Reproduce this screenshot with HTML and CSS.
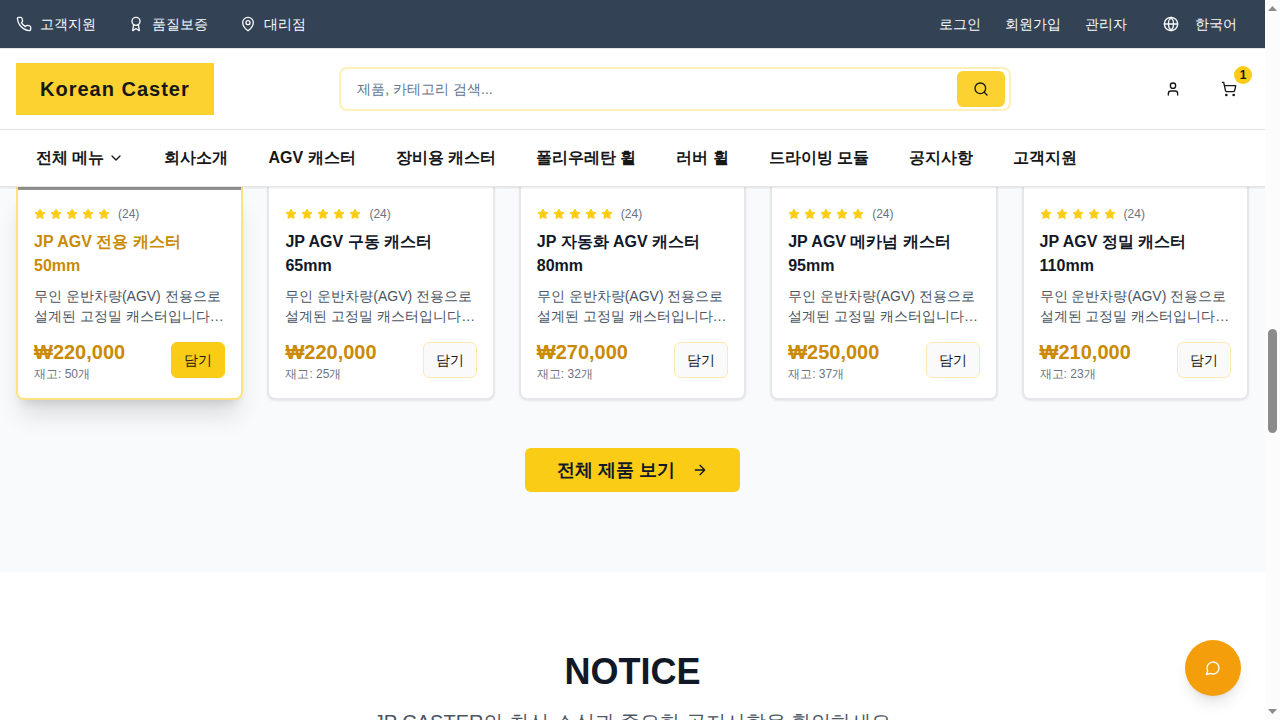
FILE: index.html
```html
<!DOCTYPE html>
<html lang="ko">
<head>
<meta charset="utf-8">
<meta name="viewport" content="width=device-width, initial-scale=1">
<title>Korean Caster</title>
<link rel="stylesheet" href="styles.css">
</head>
<body>
<svg class="sprite" aria-hidden="true">
  <symbol id="phone" viewBox="0 0 24 24"><path d="M22 16.92v3a2 2 0 0 1-2.18 2 19.79 19.79 0 0 1-8.63-3.07 19.5 19.5 0 0 1-6-6 19.79 19.79 0 0 1-3.07-8.67A2 2 0 0 1 4.11 2h3a2 2 0 0 1 2 1.72 12.84 12.84 0 0 0 .7 2.81 2 2 0 0 1-.45 2.11L8.09 9.91a16 16 0 0 0 6 6l1.27-1.27a2 2 0 0 1 2.11-.45 12.84 12.84 0 0 0 2.81.7A2 2 0 0 1 22 16.92z"/></symbol>
  <symbol id="award" viewBox="0 0 24 24"><path d="m15.477 12.89 1.515 8.526a.5.5 0 0 1-.81.47l-3.58-2.687a1 1 0 0 0-1.197 0l-3.586 2.686a.5.5 0 0 1-.81-.469l1.514-8.526"/><circle cx="12" cy="8" r="6"/></symbol>
  <symbol id="pin" viewBox="0 0 24 24"><path d="M20 10c0 4.993-5.539 10.193-7.399 11.799a1 1 0 0 1-1.202 0C9.539 20.193 4 14.993 4 10a8 8 0 0 1 16 0"/><circle cx="12" cy="10" r="3"/></symbol>
  <symbol id="globe" viewBox="0 0 24 24"><circle cx="12" cy="12" r="10"/><path d="M12 2a14.5 14.5 0 0 0 0 20 14.5 14.5 0 0 0 0-20M2 12h20"/></symbol>
  <symbol id="search" viewBox="0 0 24 24"><circle cx="11" cy="11" r="8"/><path d="m21 21-4.3-4.3"/></symbol>
  <symbol id="user" viewBox="0 0 24 24"><path d="M19 21v-2a4 4 0 0 0-4-4H9a4 4 0 0 0-4 4v2"/><circle cx="12" cy="7" r="4"/></symbol>
  <symbol id="cart" viewBox="0 0 24 24"><circle cx="8" cy="21" r="1"/><circle cx="19" cy="21" r="1"/><path d="M2.05 2.05h2l2.66 12.42a2 2 0 0 0 2 1.58h9.78a2 2 0 0 0 1.95-1.57l1.65-7.43H5.12"/></symbol>
  <symbol id="chevron" viewBox="0 0 24 24"><path d="m6 9 6 6 6-6"/></symbol>
  <symbol id="arrow" viewBox="0 0 24 24"><path d="M5 12h14M12 5l7 7-7 7"/></symbol>
  <symbol id="chat" viewBox="0 0 24 24"><path d="M7.9 20A9 9 0 1 0 4 16.1L2 22Z"/></symbol>
  <symbol id="star" viewBox="0 0 24 24"><path d="M12 2l3.09 6.26L22 9.27l-5 4.87 1.18 6.88L12 17.77l-6.18 3.25L7 14.14 2 9.27l6.91-1.01L12 2z"/></symbol>
  <symbol id="stars" viewBox="0 0 76 12"><use href="#star" width="12" height="12"/><use href="#star" x="16" width="12" height="12"/><use href="#star" x="32" width="12" height="12"/><use href="#star" x="48" width="12" height="12"/><use href="#star" x="64" width="12" height="12"/></symbol>
</svg>
<div class="page">
  <header class="header">
    <div class="topbar">
      <div class="topbar-links">
        <a href="#"><svg class="icon"><use href="#phone"/></svg>고객지원</a>
        <a href="#"><svg class="icon"><use href="#award"/></svg>품질보증</a>
        <a href="#"><svg class="icon"><use href="#pin"/></svg>대리점</a>
      </div>
      <div class="account-links">
        <a href="#">로그인</a>
        <a href="#">회원가입</a>
        <a href="#">관리자</a>
        <button class="language" type="button"><svg class="icon"><use href="#globe"/></svg>한국어</button>
      </div>
    </div>
    <div class="masthead">
      <a class="logo" href="#">Korean Caster</a>
      <form class="search">
        <input type="search" aria-label="제품 검색" placeholder="제품, 카테고리 검색...">
        <button type="button" aria-label="검색"><svg class="icon"><use href="#search"/></svg></button>
      </form>
      <div class="actions">
        <button type="button" aria-label="계정"><svg class="icon"><use href="#user"/></svg></button>
        <button type="button" aria-label="장바구니"><svg class="icon"><use href="#cart"/></svg><span class="badge">1</span></button>
      </div>
    </div>
    <nav class="nav">
      <button type="button">전체 메뉴<svg class="icon"><use href="#chevron"/></svg></button>
      <a href="#">회사소개</a>
      <a href="#">AGV 캐스터</a>
      <a href="#">장비용 캐스터</a>
      <a href="#">폴리우레탄 휠</a>
      <a href="#">러버 휠</a>
      <a href="#">드라이빙 모듈</a>
      <a href="#">공지사항</a>
      <a href="#">고객지원</a>
    </nav>
  </header>
  <main>
    <section class="products">
      <div class="grid">
        <article class="card card-active">
          <div class="media"></div>
          <div class="card-body">
            <div class="rating"><svg class="stars"><use href="#stars"/></svg><span>(24)</span></div>
            <h3>JP AGV 전용 캐스터 50mm</h3>
            <p class="desc">무인 운반차량(AGV) 전용으로 설계된 고정밀 캐스터입니다…</p>
            <div class="buy"><div><div class="price">₩220,000</div><div class="stock">재고: 50개</div></div><button type="button">담기</button></div>
          </div>
        </article>
        <article class="card">
          <div class="media"></div>
          <div class="card-body">
            <div class="rating"><svg class="stars"><use href="#stars"/></svg><span>(24)</span></div>
            <h3>JP AGV 구동 캐스터 65mm</h3>
            <p class="desc">무인 운반차량(AGV) 전용으로 설계된 고정밀 캐스터입니다…</p>
            <div class="buy"><div><div class="price">₩220,000</div><div class="stock">재고: 25개</div></div><button type="button">담기</button></div>
          </div>
        </article>
        <article class="card">
          <div class="media"></div>
          <div class="card-body">
            <div class="rating"><svg class="stars"><use href="#stars"/></svg><span>(24)</span></div>
            <h3>JP 자동화 AGV 캐스터 80mm</h3>
            <p class="desc">무인 운반차량(AGV) 전용으로 설계된 고정밀 캐스터입니다…</p>
            <div class="buy"><div><div class="price">₩270,000</div><div class="stock">재고: 32개</div></div><button type="button">담기</button></div>
          </div>
        </article>
        <article class="card">
          <div class="media"></div>
          <div class="card-body">
            <div class="rating"><svg class="stars"><use href="#stars"/></svg><span>(24)</span></div>
            <h3>JP AGV 메카넘 캐스터 95mm</h3>
            <p class="desc">무인 운반차량(AGV) 전용으로 설계된 고정밀 캐스터입니다…</p>
            <div class="buy"><div><div class="price">₩250,000</div><div class="stock">재고: 37개</div></div><button type="button">담기</button></div>
          </div>
        </article>
        <article class="card">
          <div class="media"></div>
          <div class="card-body">
            <div class="rating"><svg class="stars"><use href="#stars"/></svg><span>(24)</span></div>
            <h3>JP AGV 정밀 캐스터 110mm</h3>
            <p class="desc">무인 운반차량(AGV) 전용으로 설계된 고정밀 캐스터입니다…</p>
            <div class="buy"><div><div class="price">₩210,000</div><div class="stock">재고: 23개</div></div><button type="button">담기</button></div>
          </div>
        </article>
      </div>
      <a class="view-all" href="#">전체 제품 보기<svg class="icon"><use href="#arrow"/></svg></a>
    </section>
    <section class="notice">
      <h2>NOTICE</h2>
      <p>JP CASTER의 최신 소식과 중요한 공지사항을 확인하세요</p>
    </section>
  </main>
  <button class="chat" type="button" aria-label="채팅 상담"><svg class="icon"><use href="#chat"/></svg></button>
</div>
<div class="scrollbar" aria-hidden="true">
  <svg class="scroll-arrow" viewBox="0 0 9 5"><path d="M0 5 4.5 0 9 5z"/></svg>
  <div class="track"><div class="thumb"></div></div>
  <svg class="scroll-arrow" viewBox="0 0 9 5"><path d="M0 0 4.5 5 9 0z"/></svg>
</div>
</body>
</html>
```
FILE: styles.css
```css
*, *::before, *::after { box-sizing: border-box; }
body {
  margin: 0;
  display: flex;
  height: 100vh;
  overflow: hidden;
  background: #fff;
  color: #111827;
  font-family: "Liberation Sans", sans-serif;
  font-size: 14px;
  line-height: 20px;
  word-break: keep-all;
}
h2, h3, p { margin: 0; }
a { color: inherit; text-decoration: none; }
button, input { font: inherit; color: inherit; margin: 0; }
button { border: 0; padding: 0; background: none; cursor: pointer; }
.sprite { position: absolute; width: 0; height: 0; }
.icon {
  width: 16px;
  height: 16px;
  flex: none;
  fill: none;
  stroke: currentColor;
  stroke-width: 2;
  stroke-linecap: round;
  stroke-linejoin: round;
}
.page { position: relative; flex: 1; min-width: 0; overflow: hidden; }

.header {
  position: relative;
  z-index: 2;
  background: #fff;
  border-bottom: 1px solid #e5e5e5;
  box-shadow: 0 1px 2px rgba(0, 0, 0, 0.1);
}
.topbar {
  display: flex;
  justify-content: space-between;
  align-items: center;
  height: 48px;
  padding: 0 16px;
  background: #344256;
  color: #f8fafc;
}
.topbar-links, .account-links { display: flex; align-items: center; }
.topbar-links { gap: 32px; }
.topbar-links a { display: flex; align-items: center; gap: 8px; }
.account-links { gap: 24px; }
.language { display: flex; align-items: center; gap: 16px; padding: 0 12px; }
.masthead {
  display: flex;
  justify-content: space-between;
  align-items: center;
  height: 82px;
  padding: 0 16px;
  border-top: 1px solid #e5e5e5;
  border-bottom: 1px solid #e5e5e5;
  color: #171717;
}
.logo {
  padding: 12px 24px;
  background: #fbd22f;
  font-size: 20px;
  line-height: 28px;
  font-weight: 700;
  letter-spacing: 1px;
}
.search {
  display: flex;
  align-items: center;
  flex: 0 1 672px;
  height: 44px;
  padding-right: 4px;
  border: 2px solid #fef0b8;
  border-radius: 8px;
}
.search input {
  flex: 1;
  min-width: 0;
  padding: 0 16px;
  border: 0;
  outline: 0;
  background: none;
}
.search input::placeholder { color: #64748b; opacity: 1; }
.search button {
  display: grid;
  place-items: center;
  width: 48px;
  height: 36px;
  border-radius: 6px;
  background: #fbd22f;
}
.actions { display: flex; gap: 16px; padding-left: 16px; }
.actions button { position: relative; display: grid; place-items: center; width: 40px; height: 40px; }
.badge {
  position: absolute;
  top: -3px;
  right: -3px;
  width: 18px;
  height: 18px;
  border-radius: 50%;
  background: #facc15;
  font-size: 12px;
  line-height: 18px;
  font-weight: 700;
  text-align: center;
}
.nav {
  display: flex;
  align-items: center;
  gap: 40px;
  height: 56px;
  padding: 0 36px;
  color: #171717;
  font-size: 16px;
  line-height: 24px;
  font-weight: 700;
  white-space: nowrap;
}
.nav button { display: flex; align-items: center; gap: 4px; }

.products { padding: 0 16px 80px; background: #f9fafc; text-align: center; }
.grid { display: grid; grid-template-columns: repeat(5, minmax(0, 1fr)); gap: 24px; text-align: left; }
.card {
  overflow: hidden;
  border: 2px solid #e5e7eb;
  border-top: 0;
  border-radius: 0 0 8px 8px;
  background: #fff;
  box-shadow: 0 1px 2px rgba(0, 0, 0, 0.08);
}
.card-active { border-color: #fde283; box-shadow: 0 20px 25px -5px rgba(0, 0, 0, 0.12), 0 8px 10px -6px rgba(0, 0, 0, 0.12); }
.media { height: 3px; }
.card-active .media { background: #939393; }
.card-body { padding: 16px; }
.rating { display: flex; align-items: center; gap: 8px; color: #6b7280; font-size: 12px; line-height: 16px; }
.stars { width: 76px; height: 12px; fill: #facc15; stroke: #facc15; stroke-width: 2; stroke-linejoin: round; }
.card h3 { margin: 8px 0; font-size: 16px; line-height: 24px; font-weight: 700; }
.card-active h3, .price { color: #ca8a04; }
.desc { color: #4b5563; }
.buy { display: flex; align-items: center; justify-content: space-between; margin-top: 12px; }
.price { font-size: 20px; line-height: 28px; font-weight: 700; }
.stock { color: #6b7280; font-size: 12px; line-height: 16px; }
.buy button {
  height: 36px;
  padding: 0 12px;
  border: 1px solid #fdeab0;
  border-radius: 6px;
  background: #fafafa;
  color: #171717;
}
.card-active .buy button { border-color: #facc15; background: #facc15; }
.view-all {
  display: inline-flex;
  align-items: center;
  gap: 16px;
  height: 44px;
  margin-top: 48px;
  padding: 0 32px;
  border-radius: 6px;
  background: #facc15;
  font-size: 18px;
  line-height: 28px;
  font-weight: 700;
  vertical-align: top;
}
.notice { padding: 80px 16px; background: #fff; text-align: center; }
.notice h2 { font-size: 36px; line-height: 40px; font-weight: 700; }
.notice p { margin-top: 16px; color: #4b5563; font-size: 20px; line-height: 28px; }
.chat {
  position: absolute;
  right: 24px;
  bottom: 24px;
  display: grid;
  place-items: center;
  width: 56px;
  height: 56px;
  border-radius: 50%;
  background: #f59e0b;
  color: #fff;
  box-shadow: 0 10px 15px -3px rgba(0, 0, 0, 0.1), 0 4px 6px -4px rgba(0, 0, 0, 0.1);
}
.scrollbar {
  display: flex;
  flex-direction: column;
  align-items: center;
  width: 15px;
  padding: 6px 0;
  background: #fcfcfc;
}
.scroll-arrow { width: 9px; height: 5px; fill: #8b8b8b; }
.track { display: flex; flex-direction: column; flex: 1; width: 9px; padding-top: 318px; }
.thumb { height: 104px; border-radius: 5px; background: #8b8b8b; }
```
